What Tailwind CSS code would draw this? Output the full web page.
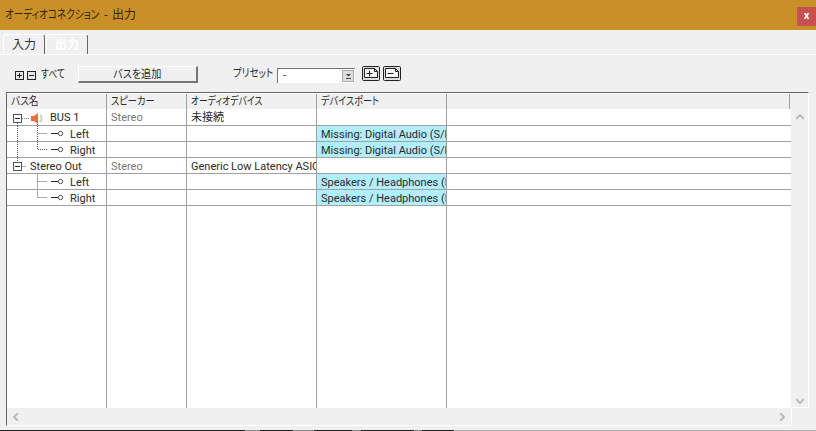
<!DOCTYPE html>
<html lang="ja">
<head>
    <meta charset="UTF-8">
    <title>オーディオコネクション - 出力</title>
    <script src="https://cdn.jsdelivr.net/npm/@tailwindcss/browser@4"></script>
</head>
<body class="w-[816px] h-[431px] overflow-hidden bg-[#f0f0f0] font-['Roboto','Noto_Sans_CJK_JP',sans-serif] [font-feature-settings:'palt'] text-[11px] text-[#2a2a2a]">
    <!-- title bar -->
    <div class="h-[30px] bg-[#c99028] flex justify-between pl-[5px]">
        <div class="flex text-[12px] leading-[30px] text-[#33260f] whitespace-nowrap">
            <span class="inline-block w-[95px] origin-left scale-x-[.8]">オーディオコネクション</span>
            <span class="w-[12px] text-center">-</span>
            <span>出力</span>
        </div>
        <div class="mt-[7px] w-[19px] h-[19px] bg-[#c75050] text-white text-[11px] font-bold leading-[17px] text-center">x</div>
    </div>

    <!-- tabs -->
    <div class="h-[25px] pt-[4px] pl-[3px] flex border-b border-white">
        <div class="w-[42px] h-[20px] border-l border-t border-white border-r border-r-[#666] rounded-t-[3px] text-center leading-[20px] text-[12px] text-[#333]">入力</div>
        <div class="w-[42px] h-[20px] ml-[1px] border-l border-t border-white border-r border-r-[#666] rounded-t-[3px] text-center leading-[20px] text-[12px] font-bold text-white">出力</div>
    </div>

    <!-- toolbar -->
    <div class="h-[37px] pl-[15px] pt-[11px] flex items-start">
        <svg class="mt-[5px]" width="9" height="9" viewBox="0 0 9 9"><rect x=".5" y=".5" width="8" height="8" fill="#e8e8e8" stroke="#222"/><path d="M2 4.500h5M4.500 2v5" stroke="#222"/></svg>
        <svg class="mt-[5px] ml-[3px]" width="9" height="9" viewBox="0 0 9 9"><rect x=".5" y=".5" width="8" height="8" fill="#e8e8e8" stroke="#222"/><path d="M2 4.500h5" stroke="#222"/></svg>
        <span class="ml-[5px] w-[37px] leading-[18px] whitespace-nowrap origin-left scale-x-[.8]">すべて</span>
        <div class="w-[120px] h-[17px] border-l border-t border-white border-r-2 border-b-2 border-r-[#777] border-b-[#777] text-center leading-[15px]"><span class="inline-block scale-x-[.92]">バスを追加</span></div>
        <span class="ml-[35px] w-[44px] leading-[16px] whitespace-nowrap origin-left scale-x-[.86]">プリセット</span>
        <div class="w-[78px] h-[15px] mt-[2px] bg-white border-l border-t border-[#777] flex justify-between">
            <span class="pl-[5px] leading-[14px]">-</span>
            <div class="w-[12px] h-[12px] mt-[1px] mr-[1px] bg-[#ddd] border border-[#aaa] flex items-center justify-center">
                <svg width="7" height="6" viewBox="0 0 7 6"><path d="M1 1h5L3.500 3.500z" fill="#444"/><path d="M1 5.500h5" stroke="#444"/></svg>
            </div>
        </div>
        <svg class="ml-[7px]" width="18" height="15" viewBox="0 0 18 15"><path d="M.5 1.500a1 1 0 0 1 1-1h15a1 1 0 0 1 1 1v12a1 1 0 0 1-1 1h-15a1 1 0 0 1-1-1z" fill="#ddd" stroke="#222"/><path d="M2.500 2.500h10l3 3v6h-13z" fill="#f4f4f4" stroke="#222"/><path d="M4.500 7.500h6M7.500 4.500v6M12.500 2.500v3h3" fill="none" stroke="#222"/></svg>
        <svg class="ml-[3px]" width="18" height="15" viewBox="0 0 18 15"><path d="M.5 1.500a1 1 0 0 1 1-1h15a1 1 0 0 1 1 1v12a1 1 0 0 1-1 1h-15a1 1 0 0 1-1-1z" fill="#ddd" stroke="#222"/><path d="M2.500 2.500h10l3 3v6h-13z" fill="#f4f4f4" stroke="#222"/><path d="M4.500 7.500h6M12.500 2.500v3h3" fill="none" stroke="#222"/></svg>
    </div>

    <!-- table + vertical scrollbar -->
    <div class="flex pl-[6px] h-[316px]">
        <div class="w-[785px] border-l border-t border-[#666] flex flex-col">
            <div class="grid grid-cols-[100px_80px_130px_130px_343px] h-[16px] border-t border-white whitespace-nowrap">
                <div class="pl-[4px] leading-[16px] border-r border-b border-[#a0a0a0]"><span class="inline-block origin-left scale-x-[.88]">バス名</span></div>
                <div class="pl-[4px] leading-[16px] border-r border-b border-[#a0a0a0]"><span class="inline-block origin-left scale-x-[.84]">スピーカー</span></div>
                <div class="pl-[4px] leading-[16px] border-r border-b border-[#a0a0a0]"><span class="inline-block origin-left scale-x-[.8]">オーディオデバイス</span></div>
                <div class="pl-[4px] leading-[16px] border-r border-b border-[#a0a0a0]"><span class="inline-block origin-left scale-x-[.83]">デバイスポート</span></div>
                <div class="border-r border-b border-[#a0a0a0]"></div>
            </div>
            <div class="grid grid-cols-[100px_80px_130px_130px_1fr] grid-rows-[17px_repeat(5,16px)_1fr] flex-1 bg-white">
                <!-- BUS 1 -->
                <div class="relative pl-[43px] leading-[18px] border-r border-b border-[#a0a0a0] whitespace-nowrap">
                    <svg class="absolute left-0 top-0" width="40" height="17" viewBox="0 0 40 17"><rect x="6.500" y="5.500" width="8" height="8" fill="#fff" stroke="#555"/><path d="M8 9.500h5" stroke="#222"/><path d="M10.500 14v3M30.500 15v2" stroke="#555" stroke-dasharray="1 1"/><path d="M15 9.500h7" stroke="#777" stroke-dasharray="1 1"/><path d="M24 7h3l4-3v11l-4-3h-3z" fill="#e2703f"/><path d="M33 6c2 2 2 5 0 7" fill="none" stroke="#ccc" stroke-width="2"/></svg>
                    BUS 1
                </div>
                <div class="pl-[4px] leading-[18px] border-r border-b border-[#a0a0a0] text-[#777]">Stereo</div>
                <div class="pl-[4px] leading-[18px] border-r border-b border-[#a0a0a0]">未接続</div>
                <div class="border-r border-b border-[#a0a0a0]"></div>
                <div class="border-b border-[#a0a0a0]"></div>

                <div class="relative pl-[63px] leading-[17px] border-r border-b border-[#a0a0a0]">
                    <svg class="absolute left-0 top-0" width="60" height="16" viewBox="0 0 60 16"><path d="M10.500 0v16M30.500 0v16" stroke="#555" stroke-dasharray="1 1"/><path d="M31 7.500h9" stroke="#aaa"/><path d="M44 7.500h7" stroke="#222"/><circle cx="53.500" cy="7.500" r="2.200" fill="#fff" stroke="#555"/></svg>
                    Left
                </div>
                <div class="border-r border-b border-[#a0a0a0]"></div>
                <div class="border-r border-b border-[#a0a0a0]"></div>
                <div class="pl-[4px] leading-[17px] border-r border-b border-[#a0a0a0] bg-[#b2eefc] overflow-hidden whitespace-nowrap">Missing: Digital Audio (S/PDIF)</div>
                <div class="border-b border-[#a0a0a0]"></div>

                <div class="relative pl-[63px] leading-[17px] border-r border-b border-[#a0a0a0]">
                    <svg class="absolute left-0 top-0" width="60" height="16" viewBox="0 0 60 16"><path d="M10.500 0v16M30.500 0v8" stroke="#555" stroke-dasharray="1 1"/><path d="M31 7.500h9" stroke="#555" stroke-dasharray="1 1"/><path d="M44 7.500h7" stroke="#222"/><circle cx="53.500" cy="7.500" r="2.200" fill="#fff" stroke="#555"/></svg>
                    Right
                </div>
                <div class="border-r border-b border-[#a0a0a0]"></div>
                <div class="border-r border-b border-[#a0a0a0]"></div>
                <div class="pl-[4px] leading-[17px] border-r border-b border-[#a0a0a0] bg-[#b2eefc] overflow-hidden whitespace-nowrap">Missing: Digital Audio (S/PDIF)</div>
                <div class="border-b border-[#a0a0a0]"></div>

                <!-- Stereo Out -->
                <div class="relative pl-[23px] leading-[17px] border-r border-b border-[#a0a0a0] whitespace-nowrap">
                    <svg class="absolute left-0 top-0" width="22" height="16" viewBox="0 0 22 16"><path d="M10.500 0v4" stroke="#555" stroke-dasharray="1 1"/><rect x="6.500" y="4.500" width="8" height="8" fill="#fff" stroke="#555"/><path d="M8 8.500h5" stroke="#222"/><path d="M15 8.500h4" stroke="#aaa"/></svg>
                    Stereo Out
                </div>
                <div class="pl-[4px] leading-[17px] border-r border-b border-[#a0a0a0] text-[#777]">Stereo</div>
                <div class="pl-[4px] leading-[17px] border-r border-b border-[#a0a0a0] overflow-hidden whitespace-nowrap">Generic Low Latency ASIO Driver</div>
                <div class="border-r border-b border-[#a0a0a0]"></div>
                <div class="border-b border-[#a0a0a0]"></div>

                <div class="relative pl-[63px] leading-[17px] border-r border-b border-[#a0a0a0]">
                    <svg class="absolute left-0 top-0" width="60" height="16" viewBox="0 0 60 16"><path d="M30.500 0v16M31 7.500h9" stroke="#aaa"/><path d="M44 7.500h7" stroke="#222"/><circle cx="53.500" cy="7.500" r="2.200" fill="#fff" stroke="#555"/></svg>
                    Left
                </div>
                <div class="border-r border-b border-[#a0a0a0]"></div>
                <div class="border-r border-b border-[#a0a0a0]"></div>
                <div class="pl-[4px] leading-[17px] border-r border-b border-[#a0a0a0] bg-[#b2eefc] overflow-hidden whitespace-nowrap">Speakers / Headphones (Realtek)</div>
                <div class="border-b border-[#a0a0a0]"></div>

                <div class="relative pl-[63px] leading-[17px] border-r border-b border-[#a0a0a0]">
                    <svg class="absolute left-0 top-0" width="60" height="16" viewBox="0 0 60 16"><path d="M30.500 0v7.500H40" fill="none" stroke="#aaa"/><path d="M44 7.500h7" stroke="#222"/><circle cx="53.500" cy="7.500" r="2.200" fill="#fff" stroke="#555"/></svg>
                    Right
                </div>
                <div class="border-r border-b border-[#a0a0a0]"></div>
                <div class="border-r border-b border-[#a0a0a0]"></div>
                <div class="pl-[4px] leading-[17px] border-r border-b border-[#a0a0a0] bg-[#b2eefc] overflow-hidden whitespace-nowrap">Speakers / Headphones (Realtek)</div>
                <div class="border-b border-[#a0a0a0]"></div>

                <!-- empty space, column lines only -->
                <div class="border-r border-[#a0a0a0]"></div>
                <div class="border-r border-[#a0a0a0]"></div>
                <div class="border-r border-[#a0a0a0]"></div>
                <div class="border-r border-[#a0a0a0]"></div>
                <div></div>
            </div>
        </div>
        <div class="w-[18px] border-t border-t-[#666] border-r border-r-white border-b border-b-white flex flex-col justify-between items-center pt-[21px] pb-[3px]">
            <svg width="8" height="6" viewBox="0 0 8 6"><path d="M0 5l4-4 4 4" fill="none" stroke="#bbb" stroke-width="2"/></svg>
            <svg width="8" height="6" viewBox="0 0 8 6"><path d="M0 1l4 4 4-4" fill="none" stroke="#bbb" stroke-width="2"/></svg>
        </div>
    </div>

    <!-- horizontal scrollbar -->
    <div class="ml-[6px] w-[786px] h-[18px] border-l border-l-[#666] border-r border-r-white border-b border-b-white flex justify-between items-center px-[6px]">
        <svg width="6" height="8" viewBox="0 0 6 8"><path d="M5 0L1 4l4 4" fill="none" stroke="#bbb" stroke-width="2"/></svg>
        <svg width="6" height="8" viewBox="0 0 6 8"><path d="M1 0l4 4-4 4" fill="none" stroke="#bbb" stroke-width="2"/></svg>
    </div>

    <!-- edge of the window behind -->
    <div class="mt-[4px] h-[1px] flex bg-[#b0b0b0]">
        <div class="w-[245px] bg-[#222]"></div>
        <div class="w-[15px] bg-[#888]"></div>
        <div class="w-[33px] bg-[#222]"></div>
        <div class="w-[21px] bg-[#888]"></div>
        <div class="w-[38px] bg-[#222]"></div>
        <div class="w-[9px] bg-[#888]"></div>
        <div class="w-[53px] bg-[#222]"></div>
        <div class="w-[8px] bg-[#888]"></div>
        <div class="w-[32px] bg-[#222]"></div>
    </div>
</body>
</html>
